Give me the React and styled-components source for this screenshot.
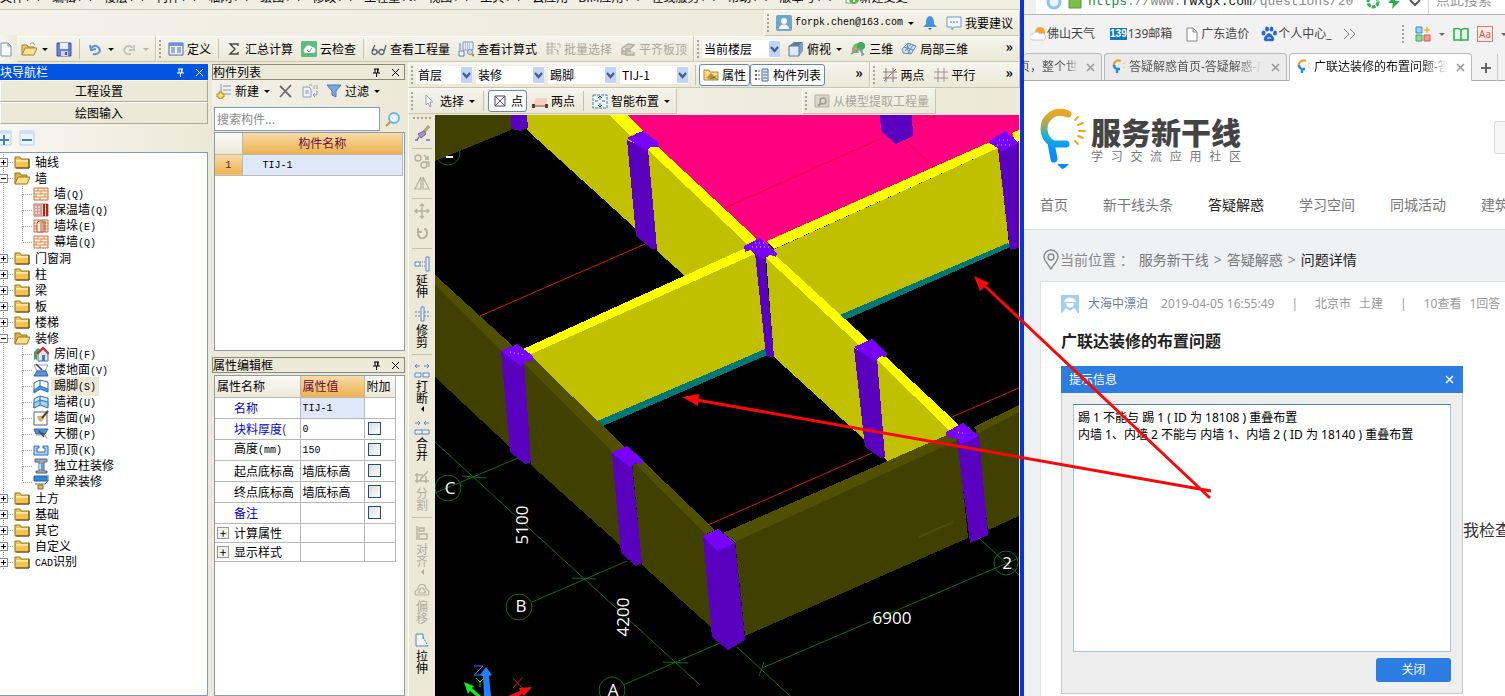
import React, { useState } from "react";
import styled, { createGlobalStyle, css } from "styled-components";

const GlobalStyle = createGlobalStyle`
  * {
    box-sizing: border-box;
  }
  body {
    margin: 0;
    overflow: hidden;
    font: 12px/16px "Noto Sans CJK SC", sans-serif;
    color: #000;
  }
  button, input, select, textarea {
    font: inherit;
    color: inherit;
  }
`;

/* ---------- icons ---------- */

const brick = (
  <>
    <path d="M1 2h14v12H1z" fill="#fdf0dc" stroke="#b8754c" />
    <path d="M1 5h14M1 8h14M1 11h14M5 2v3M11 2v3M8 5v3M3 8v3M12 8v3M7 11v3" stroke="#e08a50" fill="none" />
  </>
);

const icons = {
  page: <path d="M2 2h7l3 3v10H2z M9 2v3h3" fill="#f8fbff" stroke="#7c90ad" />,
  open: (
    <>
      <path d="M1 14V4h5l1 2h6v2" fill="#f1c865" stroke="#a5823a" />
      <path d="M1 14l3-7h12l-3 7z" fill="#ffe08c" stroke="#a5823a" />
      <path d="M9 3c2-2 4-1 5 1" fill="none" stroke="#7b8a99" />
    </>
  ),
  save: (
    <>
      <path d="M1 2h14v13H1z" fill="#6d7fd0" stroke="#45559c" />
      <path d="M4 2h8v6H4z" fill="#e9eefb" />
      <path d="M5 10h7v5H5z" fill="#cdd6ef" />
      <path d="M9 11h2v3H9z" fill="#45559c" />
    </>
  ),
  undo: <path d="M6 13c6 1 8-3 6-6S6 4 5 7M3 4l1 5 5-1" fill="none" stroke="#5f8fd6" strokeWidth="2" />,
  redo: <path d="M9 13c-6 1-8-3-6-6s6-3 7 0M12 4v5H7" fill="none" stroke="#c4c4bc" strokeWidth="2" />,
  define: (
    <>
      <path d="M1 2h14v12H1z" fill="#eef4ff" stroke="#4a69a8" />
      <path d="M1 2h14v3H1z" fill="#6d92d8" />
      <path d="M3 7h4M3 9h4M3 11h4M9 7h4M9 9h4M9 11h4" stroke="#4a69a8" />
    </>
  ),
  sigma: <path d="M12 5V3H4l5 5-5 5h8v-2" fill="none" stroke="#444" strokeWidth="1.4" />,
  cloud: (
    <>
      <rect width="16" height="16" rx="1" fill="#5cbd83" />
      <path d="M4 12a3 3 0 0 1 0-5 4 4 0 0 1 7-1 3 3 0 0 1 1 6z" fill="#fff" />
      <path d="M6 9l2 2 3-4" fill="none" stroke="#5cbd83" />
    </>
  ),
  glasses: <path d="M1 11a2.500 2.500 0 1 0 5 0 2.500 2.500 0 1 0-5 0M8 11a2.500 2.500 0 1 0 5 0 2.500 2.500 0 1 0-5 0M6 11h2M1 10l3-6M13 11l2-7" fill="none" stroke="#5d6574" strokeWidth="1.3" />,
  formula: (
    <>
      <path d="M5 1h10v8H5z" fill="#e5ecfa" stroke="#8397c0" />
      <path d="M7 3h6M7 5h6M7 7h6" stroke="#8397c0" strokeDasharray="1 1" />
      <path d="M2 2v7M1 10h5v5H1z" stroke="#4f7fc8" fill="#fff" />
      <circle cx="12" cy="11" r="2.5" fill="#c9d8ee" stroke="#8397c0" />
      <path d="M14 13l2 2" stroke="#b0813a" strokeWidth="2" />
    </>
  ),
  batch: <path d="M1 3h10M1 6h10M1 9h6M1 12h6M3 1v13M7 1v13M9 8l5 2-2 1 2 3M12 3h3v4" fill="none" stroke="#b5b3a6" />,
  slab: <path d="M2 7l6-4 6 1-4 4H6v6h8v-3M2 7v6h4M3 10h8" fill="#d4d1c2" stroke="#b0ad9f" strokeWidth="1.4" />,
  cube: (
    <>
      <path d="M1 5l5-4h9l-4 4z" fill="#5a7ca5" />
      <path d="M11 5l4-4v9l-4 5z" fill="#7fa0c8" />
      <path d="M1 5h10v10H1z" fill="#dfeaf7" stroke="#587aa4" />
    </>
  ),
  orbit: (
    <>
      <path d="M2 12C1 5 5 2 9 2l3 3-4 3 1 4z" fill="#5cbf7c" />
      <circle cx="11" cy="5" r="4" fill="#3fae5f" />
      <path d="M3 7l4-2v5l-3 2z" fill="#e4974b" />
      <path d="M1 13l8-5 5 6M12 8v7" fill="none" stroke="#8a97a8" strokeWidth="1.5" />
    </>
  ),
  local3d: (
    <>
      <path d="M1 8l6-6 8 3-5 8-8-1z" fill="#cfe2f5" stroke="#5e8cba" />
      <path d="M4 10l6-7M7 12l5-8M3 6l9 3M7 2l-1 6 4 5" stroke="#5e8cba" fill="none" />
    </>
  ),
  user: (
    <>
      <rect width="16" height="16" rx="2" fill="#6ca7cc" />
      <circle cx="8" cy="6" r="3" fill="#fff" />
      <path d="M3 14c0-6 10-6 10 0z" fill="#fff" />
    </>
  ),
  bell: (
    <>
      <path d="M8 1c4 1 4 5 4 8l3 3H1l3-3c0-3 0-7 4-8z" fill="#4a90e2" />
      <path d="M6 13h4l-2 2z" fill="#2d6bb8" />
    </>
  ),
  suggest: (
    <>
      <path d="M1 2h14v10H8l-2 3v-3H1z" fill="#f4f9ff" stroke="#6c9ad0" />
      <path d="M4 7h9" stroke="#4a7ab0" strokeDasharray="2 1" />
    </>
  ),
  change: (
    <>
      <path d="M2 2h9v12H2z" fill="#fff" stroke="#6aa06a" />
      <circle cx="10" cy="10" r="5" fill="#56b947" />
      <path d="M10 7v6M7 10h6" stroke="#fff" strokeWidth="2" />
    </>
  ),
  props: (
    <>
      <path d="M1 3h5l1 2h8v8H1z" fill="#fdda85" stroke="#a9843c" />
      <path d="M3 11l5-5 3 3 3-1-3 5z" fill="#c88a2e" />
      <path d="M7 12l4-2 4 3" stroke="#3a8a4a" fill="none" />
    </>
  ),
  list: (
    <>
      <path d="M1 3h2v2H1zM1 7h2v2H1zM1 11h2v2H1z" fill="#5d6c88" />
      <path d="M4 4h2M4 8h2M4 12h2" stroke="#5d6c88" />
      <path d="M8 2h6v12H8z" fill="#dfe9fa" stroke="#4a69a8" />
      <path d="M9 5h4M9 8h4M9 11h4" stroke="#4a69a8" />
    </>
  ),
  twoAxis: <path d="M4 1v14M11 1v14M1 5h14M1 11h14M2 14L14 2" stroke="#8a7780" fill="none" />,
  parallel: <path d="M5 1v14M11 1v14M1 5h14M1 11h14" stroke="#a08c90" fill="none" />,
  cursor: <path d="M5 2v10l2-2 2 4 1-1-1-4h3z" fill="#fff" stroke="#8fa4c4" />,
  point: (
    <>
      <path d="M3 3h10v10H3z" fill="#fff" stroke="#33458e" />
      <path d="M3 3l10 10M13 3L3 13" stroke="#b0344f" />
    </>
  ),
  line2: (
    <>
      <path d="M1 12l3-7h11v7z" fill="#f6cfc2" />
      <path d="M1 13h14" stroke="#7a4a40" />
      <path d="M0 11h3v4H0zM13 11h3v4h-3z" fill="#5d403a" />
    </>
  ),
  smart: (
    <>
      <path d="M1 2h14v13H1z" fill="#eef6ff" stroke="#4c77a8" strokeDasharray="3 1" />
      <path d="M8 4v3M8 10v3M3 8h3M10 8h3M6 5l2-2 2 2M6 12l2 2 2-2" stroke="#3e5f8a" fill="none" />
    </>
  ),
  extract: (
    <>
      <path d="M1 2h14v12H1z" fill="#d9d6c8" stroke="#b5b2a4" />
      <circle cx="9" cy="8" r="3" fill="none" stroke="#a09d90" strokeWidth="1.5" />
      <path d="M7 10l-3 3" stroke="#a09d90" strokeWidth="2" />
    </>
  ),
  add: (
    <>
      <path d="M7 3h8M7 7h8M7 11h8M5 1v8" stroke="#7d93ba" fill="none" />
      <path d="M3 9h3v2h2v3H6v2H3v-2H1v-3h2z" fill="#ffe063" stroke="#a98c20" />
    </>
  ),
  remove: <path d="M2 3l11 11M13 2L2 14" stroke="#6d6d6d" strokeWidth="1.8" />,
  copyDoc: (
    <>
      <path d="M1 4h6l2 2v8H1zM7 2h3" fill="#eef3fb" stroke="#8b9dbd" />
      <path d="M3 8h4M3 10h4M12 2v4M15 2v4M15 8v4h-4M13 10l-2 2 2 2" fill="none" stroke="#8b9dbd" />
    </>
  ),
  filter: <path d="M1 2h14l-5 6v6l-4-2V8z" fill="#7aa8e4" stroke="#4b76b5" />,
  search: (
    <>
      <circle cx="9" cy="7" r="5" fill="#e2f2ff" stroke="#6ab4e4" strokeWidth="1.800" />
      <path d="M5 11l-4 4" stroke="#c69450" strokeWidth="2" />
    </>
  ),
  plusBox: (
    <>
      <path d="M1 1h14v14H1z" fill="#edf4ff" stroke="#b9cce8" />
      <path d="M1 1h14v3H1z" fill="#cfdffa" />
      <path d="M3 10h10M8 5v10" stroke="#3f87b8" strokeWidth="2" />
    </>
  ),
  minusBox: (
    <>
      <path d="M1 1h14v14H1z" fill="#edf4ff" stroke="#b9cce8" />
      <path d="M1 1h14v3H1z" fill="#cfdffa" />
      <path d="M3 10h10" stroke="#3f87b8" strokeWidth="2" />
    </>
  ),
  folder: (
    <>
      <path d="M1 3h5l1 2h8v9H1z" fill="#f3c44d" stroke="#8d7435" />
      <path d="M2 6h12v2H2z" fill="#ffe596" />
      <path d="M2 14h13V5" fill="none" stroke="#584617" />
    </>
  ),
  folderOpen: (
    <>
      <path d="M1 14V3h5l1 2h6v3" fill="#e5b43f" stroke="#8d7435" />
      <path d="M1 14l3-7h12l-3 7z" fill="#ffdf80" stroke="#8d7435" />
    </>
  ),
  brick,
  brickWarm: (
    <>
      {brick}
      <path d="M1 2h8v12H1z" fill="#d79a9a" />
      <path d="M11 2v12M14 2v12" stroke="#a02b22" strokeWidth="2" />
      <path d="M2 5h6M2 8h6M2 11h6" stroke="#fff" strokeDasharray="2 1" />
    </>
  ),
  brickPier: (
    <>
      {brick}
      <path d="M4 5l2-2h4v11H4z" fill="#fff6ea" stroke="#b5512c" />
      <path d="M8 4v10M12 3v11" stroke="#b5512c" />
    </>
  ),
  room: (
    <>
      <path d="M1 7l3-4v9l-3 2z" fill="#3c9a58" />
      <path d="M1 6l4-4 3 2-4 4v6l-3-2z" fill="#3fa85c" />
      <path d="M5 8v7h10V8l-5-5z" fill="#dceaff" stroke="#4a6aa8" />
      <path d="M4 8l6-6 6 6" fill="none" stroke="#cf3438" strokeWidth="2.400" />
      <path d="M9 9h3v6H9z" fill="#4a78c8" />
    </>
  ),
  floor: (
    <>
      <path d="M1 3h14l-3 6H4z" fill="#fff" stroke="#8fa2c0" />
      <path d="M4 9h9l2 5H1z" fill="#5a94e0" stroke="#2f62ae" />
      <path d="M3 2l6 6" stroke="#444" strokeWidth="1.6" />
    </>
  ),
  skirting: (
    <>
      <path d="M1 5l6-3 8 2v8l-7-2-7 4z" fill="#f3f9ff" stroke="#2e6fb6" />
      <path d="M1 12l6-4 8 3v3l-8-3-6 4zM7 2v7" fill="#4a9ae6" stroke="#2e6fb6" />
    </>
  ),
  dado: (
    <>
      <path d="M1 5l6-3 8 2v8l-7-2-7 4z" fill="#cfe6fb" stroke="#2e6fb6" />
      <path d="M1 9l6-3 8 2v6l-8-3-6 3zM7 2v9" fill="#a3d0f5" stroke="#2e6fb6" />
    </>
  ),
  wallFace: (
    <>
      <path d="M1 2h13v13H1z" fill="#fff" stroke="#565f70" />
      <path d="M4 6h7v3l-3 3-3-2z" fill="#d8b46c" />
      <path d="M9 8l6-7" stroke="#54402a" strokeWidth="2" />
    </>
  ),
  ceiling: (
    <>
      <path d="M1 3h14l-3 5H3z" fill="#4b90de" stroke="#3167ae" />
      <path d="M3 9h9l2 4" fill="none" stroke="#8fa2c0" />
      <path d="M6 5l5 6M7 7l5 1" stroke="#4b4b4b" strokeWidth="1.6" />
    </>
  ),
  suspend: <path d="M1 4h5v2H4v4h8V6h-2V4h5v9H1z" fill="#a9d3f7" stroke="#2e6fb6" />,
  column: (
    <>
      <path d="M2 1h12v3h-3v9h3v2H3v-2h3V4H2z" fill="#9da5b1" stroke="#586474" />
      <path d="M6 6h4v5H6z" fill="#a9d8fb" />
      <path d="M9 5v8" stroke="#2e6fb6" />
    </>
  ),
  beam: (
    <>
      <path d="M1 2h13v5H1z" fill="#2f87d8" stroke="#1f62a6" />
      <path d="M15 1v6l-3 3H2" fill="none" stroke="#4a6c94" />
      <path d="M5 11h5v4H5z" fill="#d8b46c" stroke="#876c38" />
    </>
  ),
  brush: (
    <>
      <path d="M15 1l-5 6" stroke="#a8a878" strokeWidth="3" />
      <path d="M10 6L4 9l3 4 5-4z" fill="#a992c8" stroke="#74609a" />
      <path d="M1 15h3M5 12l-2 3M12 15h4" stroke="#7a6cb0" strokeWidth="1.500" />
    </>
  ),
  copy: <path d="M1 5a3 3 0 1 0 6 0 3 3 0 1 0-6 0M7 12a3 3 0 1 0 6 0 3 3 0 1 0-6 0M10 2l4 4M14 3v3h-3M9 9h6v5" fill="none" stroke="#b4b1a4" strokeWidth="1.4" />,
  mirror: <path d="M7 2v12H1zM9 2v12h6z" fill="none" stroke="#b4b1a4" strokeWidth="1.200" />,
  move: <path d="M8 1v14M1 8h14M6 3l2-2 2 2M6 13l2 2 2-2M3 6L1 8l2 2M13 6l2 2-2 2" fill="none" stroke="#b4b1a4" strokeWidth="1.4" />,
  rotate: <path d="M4 3v4h4M4 7c-1 8 9 8 9 1 0-2-1-4-3-4" fill="none" stroke="#b4b1a4" strokeWidth="2" />,
  extend: (
    <>
      <path d="M12 1h3v14h-3zM1 6h5v4H1z" fill="#eaf2ff" stroke="#5c86c4" />
      <path d="M6 6h6M6 10h6" stroke="#5c86c4" strokeDasharray="1 1" />
    </>
  ),
  trim: (
    <>
      <path d="M7 1h3v14H7z" fill="#eaf2ff" stroke="#5c86c4" />
      <path d="M1 6h6M1 10h6M10 6h6M10 10h6" stroke="#5c86c4" strokeDasharray="2 1" />
    </>
  ),
  split2: <path d="M1 11h6v4H1zM9 11h6v4H9zM1 4h5M10 4h5M3 2L1 4l2 2M13 2l2 2-2 2" fill="#eaf2ff" stroke="#5c86c4" />,
  merge: <path d="M1 11h14v4H1zM8 11v4M1 4h5M10 4h5M4 2l2 2-2 2M12 2l-2 2 2 2" fill="#eaf2ff" stroke="#5c86c4" />,
  divide: <path d="M1 12h14M1 6h8M3 4v10M12 7v7M6 11l8-9" fill="none" stroke="#b4b1a4" strokeWidth="1.4" />,
  align: <path d="M3 1v14M5 3h5v3H5zM5 9h8v5H5z" fill="none" stroke="#b4b1a4" strokeWidth="1.4" />,
  offset: <path d="M2 13c-2-3 0-5 2-6 0-6 8-6 8 0 2 1 4 3 2 6zM5 11c-1-2 1-2 1-3 0-3 4-3 4 0 0 1 2 1 1 3z" fill="none" stroke="#b4b1a4" strokeWidth="1.2" />,
  stretch: (
    <>
      <path d="M2 2h7v4l5 8H2z" fill="#eef5ff" stroke="none" />
      <path d="M14 14H2V2h7v5" fill="none" stroke="#5c86a8" />
      <path d="M9 5l5 9" stroke="#5c86a8" strokeDasharray="2 1" />
    </>
  ),
  bulb: (
    <>
      <path d="M10 2C5 0 2 4 3 8" fill="none" stroke="#e8a922" strokeWidth="2.400" />
      <path d="M3 6c0 4 3 4 6 4M6 10v4" fill="none" stroke="#1b8df0" strokeWidth="2.400" />
      <path d="M12 5l2-1M12 8l2 1" stroke="#f3c878" />
    </>
  ),
  weather: (
    <>
      <circle cx="10" cy="6" r="5" fill="#f9a233" />
      <path d="M2 14a3 3 0 0 1 1-6 4 4 0 0 1 7 0 3 3 0 0 1 4 6z" fill="#fff" stroke="#c9ccd2" />
    </>
  ),
  blank: <path d="M3 2h6l4 4v9H3zM9 2v4h4" fill="#fff" stroke="#888" />,
  paw: (
    <g fill="#2b66d9">
      <ellipse cx="2.500" cy="7" rx="2" ry="2.500" />
      <ellipse cx="6" cy="3" rx="2" ry="2.500" />
      <ellipse cx="10.500" cy="3" rx="2" ry="2.500" />
      <ellipse cx="14" cy="7" rx="2" ry="2.500" />
      <path d="M8 7c2 0 6 5 5 7s-3 1-5 1-4 1-5-1 3-7 5-7z" />
      <path d="M6 12h4" stroke="#fff" />
    </g>
  ),
  apps: (
    <>
      <path d="M1 1h6v6H1z" fill="#9bd2f4" stroke="#3b8fca" />
      <path d="M1 9h6v6H1z" fill="#8ed89d" stroke="#3fa657" />
      <path d="M9 9h6v6H9z" fill="#f49c92" stroke="#d9584c" />
      <path d="M12 0l1 3 3 1-3 1-1 3-1-3-3-1 3-1z" fill="#f7b924" />
    </>
  ),
  book: <path d="M1 3c3-1 5-1 7 1 2-2 4-2 7-1v11H1zM8 4v11" fill="#e9fbee" stroke="#2cb24c" strokeWidth="1.6" />,
};

const Svg = styled.svg`
  width: 16px;
  height: 16px;
  flex: none;
  display: block;
`;

const Icon = ({ name }) => (
  <Svg viewBox="0 0 16 16" aria-hidden="true">
    {icons[name]}
  </Svg>
);

const Caret = styled.span`
  flex: none;
  margin-left: ${(p) => p.$gap || 0}px;
  border: 3px solid transparent;
  border-top-color: ${(p) => p.$color || "#000"};
  border-bottom: 0;
`;

const Mono = styled.span`
  font: 10px/16px "Liberation Mono", monospace;
`;

/* ---------- shell ---------- */

const Desktop = styled.div`
  position: relative;
  display: grid;
  grid-template-columns: minmax(0, 1fr) 481px;
  height: 100vh;
  overflow: hidden;
`;

const CadWindow = styled.section`
  display: flex;
  flex-direction: column;
  min-width: 0;
  min-height: 0;
  background: #ece9d8;
  border-right: 4px solid #0c34cf;
`;

const MenuBar = styled.nav`
  display: flex;
  align-items: flex-end;
  gap: 10px;
  height: 10px;
  padding-bottom: 4px;
  overflow: hidden;
  white-space: nowrap;
  border-bottom: 1px solid #cfccbc;
  background: #f1efe4;
`;

const MenuItem = styled.button`
  display: flex;
  flex: none;
  align-items: center;
  padding: 0;
  border: 0;
  background: none;
  line-height: 16px;
`;

const ToolRow = styled.div`
  display: flex;
  flex: none;
  align-items: stretch;
  height: 26px;
  justify-content: ${(p) => (p.$end ? "flex-end" : "flex-start")};
  background: linear-gradient(90deg, #f3f1e8, #ece9d8);
`;

const ToolBar = styled.div`
  display: flex;
  align-items: center;
  gap: ${(p) => p.$gap || 0}px;
  flex: ${(p) => (p.$grow ? "1" : "none")};
  min-width: 0;
  padding: 0 2px;
  border: 1px solid;
  border-color: #fbfaf5 #c9c5b2 #c9c5b2 #fbfaf5;
  background: linear-gradient(#f5f4ec, #ebe8d7);
`;

const Grip = styled.span`
  flex: none;
  width: 3px;
  height: 18px;
  margin-right: 2px;
  background: radial-gradient(circle at 1px 1px, #a6a392 1px, transparent 1px) 0 0 / 3px 4px;
`;

const Sep = styled.span`
  flex: none;
  width: 1px;
  height: 20px;
  margin: 0 3px;
  background: #c5c2b2;
`;

const Tool = styled.button`
  display: flex;
  flex: none;
  align-items: center;
  gap: 3px;
  height: 22px;
  padding: 0 4px;
  border: 0;
  border-radius: 3px;
  background: none;
  white-space: nowrap;
  ${Caret} {
    margin-left: 2px;
  }
  &:disabled {
    color: #a9a698;
  }
  ${(p) =>
    p.$pressed &&
    css`
      padding: 0 3px;
      border: 1px solid #6a87b4;
      background: #fdfdfb;
    `}
`;

const Spacer = styled.span`
  flex: 1;
`;

const More = styled.button`
  padding: 0 4px 6px;
  border: 0;
  background: none;
  font-size: 14px;
  font-weight: 700;
  line-height: 14px;
`;

const ComboBox = styled.label`
  position: relative;
  flex: none;
  width: ${(p) => p.$width}px;
  margin-right: 4px;
`;

const ComboSelect = styled.select`
  display: block;
  width: 100%;
  height: 18px;
  padding: 0 2px;
  border: 0;
  border-radius: 0;
  background: #fff;
  appearance: none;
  outline: none;
  line-height: 16px;
`;

const ComboArrow = styled.svg`
  position: absolute;
  top: 1px;
  right: 0;
  width: 11px;
  height: 16px;
  pointer-events: none;
`;

const Combo = ({ width, label, options }) => (
  <ComboBox $width={width}>
    <ComboSelect aria-label={label}>
      {options.map((o) => (
        <option key={o}>{o}</option>
      ))}
    </ComboSelect>
    <ComboArrow viewBox="0 0 11 16">
      <rect width="11" height="16" rx="1" fill="#c1d3fb" />
      <path d="M2 6l3.500 4L9 6" fill="none" stroke="#3d5c94" strokeWidth="2.200" />
    </ComboArrow>
  </ComboBox>
);

const CadBody = styled.div`
  display: flex;
  flex: 1;
  min-height: 0;
`;

/* ---------- docked panels ---------- */

const Dock = styled.aside`
  display: flex;
  flex: none;
  flex-direction: column;
  width: ${(p) => p.$width}px;
  padding-top: 2px;
  margin-right: 4px;
  min-height: 0;
`;

const DockTitle = styled.header`
  display: flex;
  flex: none;
  align-items: center;
  gap: 10px;
  height: 16px;
  padding-right: 4px;
  overflow: hidden;
  color: ${(p) => (p.$active ? "#fff" : "#000")};
  background: ${(p) => (p.$active ? "#0054e3" : "#ece9d8")};
  border: ${(p) => (p.$active ? "0" : "1px solid #8b887a")};
  white-space: nowrap;
`;

const DockName = styled.h2`
  flex: 1;
  margin: 0;
  font-size: 12px;
  font-weight: 400;
  line-height: 14px;
`;

const DockButton = styled.button`
  padding: 0;
  border: 0;
  background: none;
`;

const SmallSvg = styled.svg`
  display: block;
  width: 9px;
  height: 9px;
`;

const DockHeader = ({ title, active }) => (
  <DockTitle $active={active}>
    <DockName>{title}</DockName>
    <DockButton aria-label="pin">
      <SmallSvg viewBox="0 0 9 9">
        <path d="M2 1h5M3 1v4M6 1v4M1 5h7M4.500 5v4M5.500 1v4" fill="none" stroke="currentColor" />
      </SmallSvg>
    </DockButton>
    <DockButton aria-label="close">
      <SmallSvg viewBox="0 0 9 9">
        <path d="M1 1l7 7M8 1L1 8" stroke="currentColor" />
      </SmallSvg>
    </DockButton>
  </DockTitle>
);

const WideButton = styled.button`
  flex: none;
  height: 22px;
  padding: 0 10px 0 0;
  border: 1px solid;
  border-color: #fff #aca899 #aca899 #fff;
  background: #ece9d8;
`;

const IconStrip = styled.div`
  display: flex;
  flex: none;
  align-items: center;
  gap: 7px;
  height: 28px;
  padding-right: 2px;
  margin-left: -4px;
  background: linear-gradient(90deg, #f8f7f1, #ece9d8);
`;

const BareButton = styled.button`
  padding: 0;
  border: 0;
  background: none;
`;

const Tree = styled.ul`
  flex: 1;
  min-height: 0;
  margin: 0;
  padding: 1px 0 0;
  overflow: hidden;
  list-style: none;
  background: #fff;
  border: 1px solid #7f9db9;
  border-left: 0;
`;

const TreeRow = styled.li`
  display: flex;
  align-items: center;
  height: 16px;
`;

const TreeLabel = styled.span`
  margin-left: 2px;
  padding: 0 3px;
  line-height: 16px;
  white-space: nowrap;
  background: ${(p) => (p.$selected ? "#ece9d8" : "none")};
`;

const Guide = styled.svg`
  flex: none;
  width: ${(p) => p.$width}px;
  height: 16px;
`;

const treeData = [
  { text: "轴线" },
  {
    text: "墙",
    items: [
      ["brick", "墙", "(Q)"],
      ["brickWarm", "保温墙", "(Q)"],
      ["brickPier", "墙垛", "(E)"],
      ["brick", "幕墙", "(Q)"],
    ],
  },
  { text: "门窗洞" },
  { text: "柱" },
  { text: "梁" },
  { text: "板" },
  { text: "楼梯" },
  {
    text: "装修",
    items: [
      ["room", "房间", "(F)"],
      ["floor", "楼地面", "(V)"],
      ["skirting", "踢脚", "(S)"],
      ["dado", "墙裙", "(U)"],
      ["wallFace", "墙面", "(W)"],
      ["ceiling", "天棚", "(P)"],
      ["suspend", "吊顶", "(K)"],
      ["column", "独立柱装修", ""],
      ["beam", "单梁装修", ""],
    ],
  },
  { text: "土方" },
  { text: "基础" },
  { text: "其它" },
  { text: "自定义" },
  { text: "CAD识别" },
];

const dots = { stroke: "#a0a0a0", strokeDasharray: "1 1", fill: "none" };

const NavTree = () => (
  <Tree>
    {treeData.map((node) => (
      <React.Fragment key={node.text}>
        <TreeRow>
          <Guide $width={14} viewBox="0 0 14 16">
            <path d="M3.500 0v16M8 8.500h6" {...dots} />
            <rect x="-0.500" y="4.500" width="8" height="8" fill="#fff" stroke="#7c8ba5" />
            <path d={node.items ? "M1 8.500h5" : "M1 8.500h5M3.500 6v5"} stroke="#000" />
          </Guide>
          <Icon name={node.items ? "folderOpen" : "folder"} />
          <TreeLabel>
            {node.text.startsWith("CAD") ? (
              <>
                <Mono>CAD</Mono>识别
              </>
            ) : (
              node.text
            )}
          </TreeLabel>
        </TreeRow>
        {(node.items || []).map(([icon, text, key], i) => (
          <TreeRow key={text}>
            <Guide $width={33} viewBox="0 0 33 16">
              <path d={`M3.500 0v16M22.500 0v${i === node.items.length - 1 ? 8 : 16}M23 8.500h10`} {...dots} />
            </Guide>
            <Icon name={icon} />
            <TreeLabel $selected={text === "踢脚"}>
              {text}
              <Mono>{key}</Mono>
            </TreeLabel>
          </TreeRow>
        ))}
      </React.Fragment>
    ))}
  </Tree>
);

const SearchLine = styled.div`
  display: flex;
  flex: none;
  align-items: center;
  gap: 5px;
  height: 25px;
  padding-left: 2px;
`;

const SearchInput = styled.input`
  width: 166px;
  height: 24px;
  padding: 0 2px;
  border: 1px solid #7f9db9;
  background: #fff;
  outline: none;
  &::placeholder {
    color: #8a8a8a;
    opacity: 1;
  }
`;

const ListFrame = styled.div`
  flex: none;
  height: 219px;
  margin: 1px 0 6px 2px;
  border: 1px solid #8f9aa8;
  background: #fff;
`;

const PropFrame = styled(ListFrame)`
  flex: 1;
  min-height: 0;
  height: auto;
  margin: 2px 0 0 2px;
`;

const Grid = styled.table`
  width: ${(p) => p.$width}px;
  border-collapse: collapse;
  table-layout: fixed;
  th,
  td {
    padding: 0 2px;
    overflow: hidden;
    font-weight: 400;
    text-align: left;
    white-space: nowrap;
    border: 1px solid #b8b8b8;
    border-width: 0 1px 1px 0;
  }
`;

const Row = styled.tr`
  height: ${(p) => p.$height || 21}px;
`;

const Head = styled.th`
  && {
    text-align: ${(p) => (p.$center ? "center" : "left")};
  }
  background: ${(p) =>
    p.$hot ? "linear-gradient(#f7dba6, #eeb14f)" : "linear-gradient(#fbfaf6, #ece9d8)"};
  color: ${(p) => (p.$hot ? "#6b0f3f" : "#000")};
`;

const Value = styled.td`
  background: ${(p) => (p.$tint ? "#dfe8f6" : "#fff")};
`;

const PropName = styled.td`
  && {
    padding-left: ${(p) => (p.$group ? 2 : 19)}px;
  }
  color: ${(p) => (p.$blue ? "#0000d0" : "#000")};
`;

const GroupLine = styled.span`
  display: flex;
  align-items: center;
  gap: 5px;
`;

const Expand = styled.button`
  width: 12px;
  height: 12px;
  padding: 0;
  border: 1px solid #9a9a9a;
  background: #f0efe8;
  line-height: 10px;
`;

const Check = styled.input`
  display: block;
  width: 13px;
  height: 13px;
  margin: 0 1px;
  appearance: none;
  border: 1px solid #1c5180;
  background: linear-gradient(135deg, #dcdcd7, #fff);
  &:checked {
    background: #1c5180;
  }
`;

const propRows = [
  { name: "名称", value: <Mono>TIJ-1</Mono>, blue: true, tint: true },
  { name: "块料厚度(", value: <Mono>0</Mono>, blue: true, check: true },
  { name: <>高度<Mono>(mm)</Mono></>, value: <Mono>150</Mono>, check: true },
  { name: "起点底标高", value: "墙底标高", check: true },
  { name: "终点底标高", value: "墙底标高", check: true },
  { name: "备注", value: "", blue: true, check: true },
];

const ComponentDock = () => {
  const [query, setQuery] = useState("");
  return (
    <Dock $width={193}>
      <DockHeader title="构件列表" />
      <ToolRow>
        <Tool>
          <Icon name="add" />
          新建
          <Caret />
        </Tool>
        <Tool aria-label="delete">
          <Icon name="remove" />
        </Tool>
        <Tool aria-label="copy">
          <Icon name="copyDoc" />
        </Tool>
        <Tool>
          <Icon name="filter" />
          过滤
          <Caret />
        </Tool>
      </ToolRow>
      <SearchLine>
        <SearchInput
          aria-label="搜索构件"
          placeholder="搜索构件..."
          value={query}
          onChange={(e) => setQuery(e.target.value)}
        />
        <BareButton aria-label="search">
          <Icon name="search" />
        </BareButton>
      </SearchLine>
      <ListFrame>
        <Grid $width={188}>
          <colgroup>
            <col width="27" />
            <col />
          </colgroup>
          <tbody>
            <Row>
              <Head />
              <Head $hot $center>构件名称</Head>
            </Row>
            <Row>
              <Head $hot $center>
                <Mono>1</Mono>
              </Head>
              <Value $tint>
                <Mono>&nbsp;&nbsp;&nbsp;TIJ-1</Mono>
              </Value>
            </Row>
          </tbody>
        </Grid>
      </ListFrame>
      <DockHeader title="属性编辑框" />
      <PropFrame>
        <Grid $width={180}>
          <colgroup>
            <col width="85" />
            <col width="64" />
            <col width="31" />
          </colgroup>
          <thead>
            <Row>
              <Head>属性名称</Head>
              <Head $hot>属性值</Head>
              <Head>附加</Head>
            </Row>
          </thead>
          <tbody>
            {propRows.map((r, i) => (
              <Row key={i}>
                <PropName $blue={r.blue}>{r.name}</PropName>
                <Value $tint={r.tint}>{r.value}</Value>
                <Value>{r.check && <Check type="checkbox" aria-label="附加" />}</Value>
              </Row>
            ))}
            {["计算属性", "显示样式"].map((g) => (
              <Row key={g} $height={19}>
                <PropName $group>
                  <GroupLine>
                    <Expand>+</Expand>
                    {g}
                  </GroupLine>
                </PropName>
                <Value />
                <Value />
              </Row>
            ))}
          </tbody>
        </Grid>
      </PropFrame>
    </Dock>
  );
};

/* ---------- work area ---------- */

const WorkArea = styled.main`
  display: flex;
  flex: 1;
  flex-direction: column;
  min-width: 0;
  min-height: 0;
  margin-left: -1px;
`;

const RowTail = styled.span`
  flex: none;
  width: 84px;
`;

const AxisTail = styled.span`
  flex: none;
  width: 22px;
`;

const Canvas = styled.div`
  display: flex;
  flex: 1;
  min-height: 0;
  margin-top: 1px;
`;

const SideTools = styled.div`
  display: flex;
  flex: none;
  flex-direction: column;
  align-items: center;
  width: 27px;
  padding-top: 2px;
  border-left: 1px solid #fff;
  overflow: hidden;
`;

const SideGrip = styled.span`
  flex: none;
  width: 18px;
  height: 3px;
  margin-bottom: 2px;
  background: radial-gradient(circle at 1px 1px, #a6a392 1px, transparent 1px) 0 0 / 4px 3px;
`;

const SideSep = styled.span`
  flex: none;
  width: 20px;
  height: 1px;
  margin: 4px 0 1px;
  background: #c5c2b2;
`;

const SideTool = styled.button`
  display: flex;
  flex: none;
  flex-direction: column;
  align-items: center;
  gap: 2px;
  width: 20px;
  height: ${(p) => p.$height}px;
  padding: ${(p) => (p.$height > 22 ? 6 : 3)}px 0 0;
  border: 0;
  background: none;
  line-height: 12px;
  &:disabled {
    color: #b0ad9f;
  }
`;

const SideCaret = styled.span`
  border: 3px solid transparent;
  border-right-color: currentColor;
  border-left: 0;
`;

const sideTools = [
  { icon: "brush" },
  "sep",
  { icon: "copy", off: true },
  { icon: "mirror", off: true },
  "sep",
  { icon: "move", off: true },
  { icon: "rotate", off: true },
  "sep",
  { icon: "extend", text: "延伸" },
  { icon: "trim", text: "修剪" },
  "sep",
  { icon: "split2", text: "打断", menu: true },
  { icon: "merge", text: "合并" },
  { icon: "divide", text: "分割", off: true },
  "sep",
  { icon: "align", text: "对齐", off: true, menu: true },
  { icon: "offset", text: "偏移", off: true },
  { icon: "stretch", text: "拉伸" },
];

const Viewport = styled.svg`
  display: block;
  flex: 1;
  min-width: 0;
  height: 100%;
  margin-right: 1px;
  background: #000;
  font-family: "Open Sans", sans-serif;
  font-size: 17px;
  fill: #fff;
`;

const FACE = "#c0c000";
const EDGE = "#ffff00";
const DARK = "#404000";
const DARK_EDGE = "#505000";
const POST = "#5a00bf";
const CAP = "#7800ff";
const TEAL = "#007878";

/* painted back to front */
const shapes = [
  ["#ff0080", "622,115 1019,115 1019,136 765,246 755,242"],
  [POST, "880,115 912,115 913,136 896,144 881,131"],
  [DARK, "435,115 511,115 511,130 435,161"],
  [FACE, "527,115 612,115 640,139 636,229 527,130"],
  [EDGE, "609,115 627,115 643,131 630,136"],
  [POST, "511,115 527,115 528,128 521,131 511,129"],
  [FACE, "648,150 748,243 756,256 686,277 657,251"],
  [EDGE, "647,149 656,145 757,239 748,245"],
  [POST, "627,140 636,236 652,249 657,249 648,149"],
  [CAP, "627,138 643,131 659,143 658,147 651,147 646,151"],
  [FACE, "766,254 777,248 998,148 1009,244 841,317"],
  [EDGE, "767,241 990,142 998,148 774,249"],
  [TEAL, "840,315 1008,243 1010,247 845,320"],
  [EDGE, "1012,133 1019,130 1019,140 1016,143"],
  [POST, "998,149 1010,250 1019,248 1019,142"],
  [CAP, "988,142 1005,131 1019,143 1001,152 996,147"],
  [FACE, "524,356 753,253 757,254 766,350 597,424 524,362"],
  [EDGE, "523,349 750,246 757,253 529,355"],
  [TEAL, "595,422 765,349 767,355 603,426"],
  [FACE, "766,257 860,343 866,441 774,357"],
  [EDGE, "765,257 773,253 869,341 859,345"],
  [POST, "755,253 766,356 774,357 765,256"],
  [CAP, "744,246 760,238 777,253 776,257 770,255 764,259 755,254 750,250 745,252"],
  [FACE, "877,360 952,430 948,435 888,462 884,457"],
  [EDGE, "876,359 884,355 959,425 951,432"],
  [POST, "854,348 865,447 881,458 885,457 877,358"],
  [CAP, "854,347 872,339 887,353 886,357 880,356 875,361"],
  [DARK, "435,282 502,348 511,448 435,377"],
  [DARK_EDGE, "435,275 514,347 502,351 435,285"],
  [DARK, "523,360 560,394 616,448 620,545 531,465"],
  [DARK_EDGE, "523,362 533,358 573,397 625,447 613,453"],
  [POST, "501,351 510,452 525,464 531,462 524,362"],
  [CAP, "501,351 517,344 533,356 532,362 526,361 521,366"],
  [DARK, "632,461 707,529 712,628 642,565"],
  [DARK_EDGE, "635,464 643,461 715,530 706,534"],
  [POST, "612,453 621,553 636,566 642,563 632,464"],
  [CAP, "612,453 627,446 643,460 642,465 636,463 630,467"],
  [DARK, "735,540 958,437 968,538 745,636"],
  [DARK_EDGE, "723,533 947,435 960,439 735,542"],
  [DARK, "976,430 1019,408 1019,516 988,530"],
  [DARK_EDGE, "974,427 1019,405 1019,412 979,433"],
  [POST, "703,536 712,637 728,650 745,640 735,543"],
  [CAP, "703,536 718,529 735,543 717,551"],
  [POST, "957,440 970,543 988,535 979,436"],
  [CAP, "946,432 963,423 979,436 961,444 955,438 947,437"],
];

const ViewportScene = () => (
  <Viewport viewBox="435 115 584 581" preserveAspectRatio="xMinYMin slice">
    <g fill="none" stroke="#0d6e1e">
      <circle cx="448" cy="153" r="12" />
      <path d="M435 442L675 662L700 685M435 493L518 458M532 602L627 561M623 685L720 643" />
      <path d="M462 476L486 478M572 578L596 579M663 662L688 663M759 676L764 662M737 647L790 696M762 668L1019 558M980 539L1019 575" />
      <circle cx="448" cy="488" r="13" />
      <circle cx="519" cy="607" r="13" />
      <circle cx="612" cy="690" r="13" />
      <circle cx="1006" cy="563" r="12" />
    </g>
    <path d="M446 157h7" stroke="#fff" strokeWidth="2" />
    <g shapeRendering="crispEdges">
      {shapes.map(([color, points]) => (
        <polygon key={points} fill={color} points={points} />
      ))}
    </g>
    <path d="M480 316L645 244M952 417L1019 388M708 525L872 453" stroke="#d01818" />
    <path d="M725 208L880 139M914 125L935 116M905 140L933 167" stroke="#d80030" />
    <path d="M919 537L953 522" stroke={DARK_EDGE} strokeWidth="2" />
    <path d="M755 243h12M752 247h18M510 352l14 3M958 432l8 2M999 140h12M997 145h13" stroke="#e8c8ff" strokeDasharray="1 3" />
    <g textAnchor="middle">
      <text x="450" y="494">C</text>
      <text x="521" y="612">B</text>
      <text x="613" y="696">A</text>
      <text x="1007" y="569">2</text>
      <text x="892" y="624">6900</text>
      <text transform="translate(528 525) rotate(-90)">5100</text>
      <text transform="translate(629 617) rotate(-90)">4200</text>
    </g>
    <path d="M474 666h9l-9 9h9" fill="none" stroke="#1e80ff" />
    <path d="M484 696l-1-20-3-1 6-8 6 8-3 1 2 20z" fill="#1e80ff" />
    <path d="M476 678l4 4 4-4M480 682v5" fill="none" stroke="#10d020" />
    <path d="M476 696l-6-5-2 3-4-12 10 4-2 2 9 8z" fill="#10e820" />
    <path d="M513 678l9 10M522 678l-9 10" stroke="#d01818" />
    <path d="M508 696l12-5-1-3 13-1-8 9-2-2-3 2z" fill="#f01010" />
  </Viewport>
);

/* ---------- browser ---------- */

const Browser = styled.section`
  display: flex;
  flex-direction: column;
  min-width: 0;
  overflow: hidden;
  background: #eff1f3;
  color: #333;
  font-family: "Noto Sans", "Noto Sans CJK SC", sans-serif;
`;

const AddressBar = styled.div`
  display: flex;
  flex: none;
  align-items: flex-end;
  height: 15px;
  padding-left: 12px;
  overflow: hidden;
  background: #f0f0f0;
  border-bottom: 1px solid #b4b4b4;
`;

const AddressInner = styled.div`
  display: flex;
  flex: 1;
  align-items: center;
  gap: 5px;
  height: 24px;
  padding-left: 10px;
  background: #fff;
`;

const Url = styled.span`
  flex: none;
  width: 272px;
  overflow: hidden;
  font: 13px/20px "Liberation Mono", monospace;
  color: #8a8a8a;
  white-space: nowrap;
  b {
    font-weight: 400;
    color: #111;
  }
  i {
    font-style: normal;
    color: #12883c;
  }
`;

const SearchBox = styled.span`
  flex: 1;
  height: 24px;
  padding-left: 7px;
  border-left: 1px solid #d5d5d5;
  color: #999;
  font-size: 14px;
  line-height: 20px;
  white-space: nowrap;
`;

const Bookmarks = styled.nav`
  display: flex;
  flex: none;
  align-items: center;
  gap: 12px;
  height: 38px;
  padding-left: 6px;
  background: #f2f2f2;
  white-space: nowrap;
`;

const Bookmark = styled.a`
  display: flex;
  align-items: center;
  gap: 1px;
  color: #444;
  text-decoration: none;
`;

const Badge139 = styled.span`
  margin-left: 3px;
  font: 700 10px/12px "Liberation Sans", sans-serif;
  color: #fff;
  background: #1379bd;
`;

const BookmarkTools = styled.div`
  display: flex;
  align-items: center;
  gap: 8px;
  margin: 0 -2px 0 auto;
`;

const AaBox = styled.span`
  width: 16px;
  height: 16px;
  border: 1px solid #e0796f;
  background: #fdeceb;
  color: #d9584c;
  font-size: 10px;
  line-height: 14px;
  text-align: center;
`;

const Tabs = styled.div`
  display: flex;
  flex: none;
  align-items: flex-end;
  gap: 2px;
  height: 28px;
  background: #f2f2f2;
  box-shadow: inset 0 -1px #a9a9a9;
`;

const Tab = styled.div`
  display: flex;
  flex: none;
  align-items: center;
  gap: 2px;
  width: ${(p) => p.$width}px;
  height: 28px;
  padding: 0 6px;
  border: 1px solid #b9b9b9;
  border-bottom-color: ${(p) => (p.$active ? "#fff" : "#a9a9a9")};
  border-radius: 4px 4px 0 0;
  background: ${(p) => (p.$active ? "#fff" : "#ebebeb")};
  color: ${(p) => (p.$active ? "#111" : "#555")};
  &:first-child {
    padding-left: 0;
    border-left: 0;
  }
`;

const TabText = styled.span`
  display: flex;
  flex: 1;
  justify-content: ${(p) => (p.$end ? "flex-end" : "flex-start")};
  min-width: 0;
  overflow: hidden;
  white-space: nowrap;
  mask-image: linear-gradient(90deg, #000 80%, transparent);
`;

const TabClose = styled.button`
  margin-left: 6px;
  padding: 0;
  border: 0;
  background: none;
  color: #999;
`;

const NewTab = styled.button`
  display: flex;
  align-items: center;
  justify-content: center;
  width: 24px;
  height: 27px;
  padding: 0;
  border: 0;
  border-right: 1px solid #ccc;
  background: none;
`;

const SiteHeader = styled.header`
  flex: none;
  height: 149px;
  padding: 28px 0 0 16px;
  background: #fff;
  border-bottom: 1px solid #dcdfe1;
`;

const Brand = styled.div`
  display: flex;
  align-items: flex-start;
  gap: 5px;
`;

const Logo = styled.svg`
  width: 46px;
  height: 60px;
`;

const BrandName = styled.h1`
  margin: 5px 0 0;
  font-family: "Noto Sans CJK SC", sans-serif;
  font-size: 30px;
  font-weight: 900;
  line-height: 34px;
  color: #444;
`;

const Slogan = styled.p`
  display: flex;
  justify-content: space-between;
  margin: 1px 0 0;
  color: #777;
`;

const SiteSearch = styled.input`
  flex: none;
  width: 160px;
  height: 33px;
  margin: 12px 0 0 auto;
  border: 1px solid #ddd;
  border-radius: 2px;
  background: #f6f6f6;
`;

const BrandRow = styled.div`
  display: flex;
  margin-right: -149px;
`;

const SiteNav = styled.nav`
  display: flex;
  gap: 35px;
  margin-top: 26px;
  font-size: 14px;
  line-height: 20px;
  white-space: nowrap;
`;

const SiteLink = styled.a`
  flex: none;
  color: ${(p) => (p.$active ? "#222" : "#777")};
  text-decoration: none;
`;

const Crumbs = styled.nav`
  display: flex;
  flex: none;
  align-items: center;
  gap: 5px;
  height: 51px;
  padding: 8px 0 0 19px;
  font-size: 14px;
  line-height: 20px;
  color: #888;
`;

const CrumbLead = styled.span`
  display: flex;
  align-items: center;
  gap: 1px;
`;

const Pin = styled.svg`
  width: 16px;
  height: 21px;
`;

const Card = styled.article`
  flex: 1;
  min-height: 0;
  margin-left: 16px;
  padding: 12px 0 0 20px;
  border: 1px solid #dfe2e4;
  border-width: 1px 0 0 1px;
  background: #fff;
  white-space: nowrap;
`;

const Meta = styled.div`
  display: flex;
  align-items: center;
  height: 20px;
  color: #999;
`;

const MetaText = styled.span`
  margin-left: ${(p) => p.$gap}px;
  color: ${(p) => p.$color || "inherit"};
`;

const Avatar = styled.svg`
  width: 18px;
  height: 18px;
`;

const Title = styled.h2`
  margin: 15px 0 13px;
  font-size: 16px;
  font-weight: 700;
  line-height: 24px;
  color: #222;
`;

const Answer = styled.div`
  display: flex;
  align-items: center;
  font-size: 16px;
`;

const Dialog = styled.div`
  flex: none;
  display: flex;
  flex-direction: column;
  width: 402px;
  height: 328px;
  background: #eee;
  border: 1px solid #c4c6c8;
  border-top: 0;
  font-size: 12px;
`;

const DialogHead = styled.div`
  display: flex;
  flex: none;
  align-items: center;
  justify-content: space-between;
  height: 27px;
  margin: 0 -1px;
  padding: 0 9px 0 8px;
  background: #2b7de1;
  color: #fff;
`;

const Message = styled.textarea`
  flex: 1;
  margin: 11px 11px 6px;
  padding: 4px;
  border: 1px solid #a9c4d8;
  border-top-color: #4a7fa5;
  outline: none;
  resize: none;
  background: #fff;
  color: #000;
  line-height: 17px;
`;

const CloseButton = styled.button`
  align-self: flex-end;
  width: 75px;
  height: 24px;
  margin: 0 11px 11px;
  padding: 0;
  border: 0;
  border-radius: 3px;
  background: #2b7de1;
  color: #fff;
`;

const Overlay = styled.svg`
  position: absolute;
  top: 0;
  left: 0;
  width: 100%;
  height: 100%;
  pointer-events: none;
`;

const message = `踢 1 不能与 踢 1 ( ID 为 18108 ) 重叠布置
内墙 1、内墙 2 不能与 内墙 1、内墙 2 ( ID 为 18140 ) 重叠布置`;

const CloseX = () => (
  <SmallSvg viewBox="0 0 9 9">
    <path d="M1 1l7 7M8 1L1 8" stroke="currentColor" strokeWidth="1.500" />
  </SmallSvg>
);

const BrowserPane = () => (
  <Browser>
    <AddressBar>
      <AddressInner>
        <Svg viewBox="0 0 16 16">
          <circle cx="8" cy="8" r="6" fill="#eaf6ff" stroke="#8cc4ef" strokeWidth="3" />
        </Svg>
        <Svg viewBox="0 0 16 16">
          <path d="M2 4h12v10H2z" fill="#7cc04a" stroke="#5b9a30" />
        </Svg>
        <Url>
          <i>https</i>://www.<b>fwxgx.com</b>/questions/20
        </Url>
        <Svg viewBox="0 0 16 16">
          <circle cx="8" cy="8" r="5" fill="none" stroke="#2cb45c" strokeWidth="3" strokeDasharray="4 1" />
        </Svg>
        <Svg viewBox="0 0 16 16">
          <path d="M9 1L2 9h5l-1 6 8-8H9z" fill="#28b24e" />
        </Svg>
        <Svg viewBox="0 0 16 16">
          <path d="M3 6l5 5 5-5" fill="none" stroke="#555" strokeWidth="2" />
        </Svg>
        <SearchBox>点此搜索</SearchBox>
      </AddressInner>
    </AddressBar>
    <Bookmarks>
      <Bookmark href="#">
        <Icon name="weather" />
        佛山天气
      </Bookmark>
      <Bookmark href="#">
        <Badge139>139</Badge139>139邮箱
      </Bookmark>
      <Bookmark href="#">
        <Icon name="blank" />
        广东造价
      </Bookmark>
      <Bookmark href="#">
        <Icon name="paw" />
        个人中心_
      </Bookmark>
      <Svg viewBox="0 0 16 16">
        <path d="M0 3l5 5-5 5M6 3l5 5-5 5" fill="none" stroke="#888" />
      </Svg>
      <BookmarkTools>
        <Grip />
        <Icon name="apps" />
        <Caret $color="#666" />
        <Icon name="book" />
        <AaBox>Aa</AaBox>
        <Caret $color="#666" />
      </BookmarkTools>
    </Bookmarks>
    <Tabs>
      <Tab $width={78}>
        <TabText $end>主页，整个世</TabText>
        <TabClose aria-label="close tab">
          <CloseX />
        </TabClose>
      </Tab>
      <Tab $width={183}>
        <Icon name="bulb" />
        <TabText>答疑解惑首页-答疑解惑-广</TabText>
        <TabClose aria-label="close tab">
          <CloseX />
        </TabClose>
      </Tab>
      <Tab $width={183} $active>
        <Icon name="bulb" />
        <TabText>广联达装修的布置问题-答疑</TabText>
        <TabClose aria-label="close tab">
          <CloseX />
        </TabClose>
      </Tab>
      <NewTab aria-label="new tab">
        <Svg viewBox="0 0 16 16">
          <path d="M3 8h10M8 3v10" stroke="#666" strokeWidth="2" />
        </Svg>
      </NewTab>
    </Tabs>
    <SiteHeader>
      <BrandRow>
        <Brand>
          <Logo viewBox="0 0 46 60">
            <defs>
              <linearGradient id="bulb" gradientUnits="userSpaceOnUse" x1="0" y1="2" x2="0" y2="44">
                <stop offset="0" stopColor="#f0a81c" />
                <stop offset="0.300" stopColor="#b0a850" />
                <stop offset="0.600" stopColor="#12b0dc" />
                <stop offset="1" stopColor="#0a8cff" />
              </linearGradient>
            </defs>
            <path d="M28 5C15-1 4 9 4 20c0 8 4 12 9 15h13M11 34l3 16" fill="none" stroke="url(#bulb)" strokeWidth="7" strokeLinecap="round" strokeLinejoin="round" />
            <path d="M17 55h12l-4 4-3 1z" fill="#0a8cff" />
            <path d="M35 11l3-3M38 16l5-2M39 22h6M38 27l5 2M35 32l3 3" stroke="#f5a81c" strokeWidth="2" strokeLinecap="round" />
          </Logo>
          <div>
            <BrandName>服务新干线</BrandName>
            <Slogan>
              {[..."学习交流应用社区"].map((c) => (
                <span key={c}>{c}</span>
              ))}
            </Slogan>
          </div>
        </Brand>
        <SiteSearch aria-label="search" />
      </BrandRow>
      <SiteNav>
        {["首页", "新干线头条", "答疑解惑", "学习空间", "同城活动", "建筑"].map((t) => (
          <SiteLink key={t} href="#" $active={t === "答疑解惑"}>
            {t}
          </SiteLink>
        ))}
      </SiteNav>
    </SiteHeader>
    <Crumbs>
      <CrumbLead>
        <Pin viewBox="0 0 16 21">
          <path d="M8 20C4 14 1 11 1 8a7 7 0 0 1 14 0c0 3-3 6-7 12z" fill="none" stroke="#888" strokeWidth="1.400" />
          <circle cx="8" cy="8" r="3" fill="none" stroke="#888" strokeWidth="1.400" />
        </Pin>
        当前位置 ：
      </CrumbLead>
      <SiteLink href="#">服务新干线</SiteLink>&gt;
      <SiteLink href="#">答疑解惑</SiteLink>&gt;
      <SiteLink href="#" $active>
        问题详情
      </SiteLink>
    </Crumbs>
    <Card>
      <Meta>
        <Avatar viewBox="0 0 18 18">
          <rect width="18" height="18" fill="#a5cdf2" />
          <path d="M3 7c1-6 11-6 12 0zM5 8h8c0 6-8 6-8 0zM1 18l4-5 4 3 4-3 4 5z" fill="#fff" />
        </Avatar>
        <MetaText $gap={9} $color="#6d7ba0">大海中漂泊</MetaText>
        <MetaText $gap={13}>2019-04-05 16:55:49</MetaText>
        <MetaText $gap={17}>|</MetaText>
        <MetaText $gap={17}>北京市</MetaText>
        <MetaText $gap={8}>土建</MetaText>
        <MetaText $gap={17}>|</MetaText>
        <MetaText $gap={17}>10查看</MetaText>
        <MetaText $gap={8}>1回答</MetaText>
      </Meta>
      <Title>广联达装修的布置问题</Title>
      <Answer>
        <Dialog>
          <DialogHead>
            提示信息
            <DockButton aria-label="close">
              <CloseX />
            </DockButton>
          </DialogHead>
          <Message aria-label="提示信息" readOnly value={message} />
          <CloseButton>关闭</CloseButton>
        </Dialog>
        我检查
      </Answer>
    </Card>
  </Browser>
);

const menus = [
  ["文件", "(F)"],
  ["编辑", "(E)"],
  ["楼层", "(L)"],
  ["构件", "(N)"],
  ["轴网", "(O)"],
  ["绘图", "(D)"],
  ["修改", "(M)"],
  ["工程量", "(Q)"],
  ["视图", "(V)"],
  ["工具", "(T)"],
  ["云应用", ""],
  ["BIM应用", "(I)"],
  ["在线服务", "(S)"],
  ["帮助", "(H)"],
  ["版本号", "(B)"],
];

const App = () => (
  <Desktop>
    <GlobalStyle />
    <CadWindow>
      <MenuBar>
        {menus.map(([text, key]) => (
          <MenuItem key={text}>
            {text}
            {key && <Mono>{key}</Mono>}
          </MenuItem>
        ))}
        <MenuItem>
          <Icon name="change" />
          新建变更
        </MenuItem>
      </MenuBar>
      <ToolRow $end>
        <ToolBar>
          <Grip />
          <Tool>
            <Icon name="user" />
            <Mono>forpk.chen@163.com</Mono>
            <Caret />
          </Tool>
          <Tool aria-label="notifications">
            <Icon name="bell" />
          </Tool>
          <Tool>
            <Icon name="suggest" />
            我要建议
          </Tool>
        </ToolBar>
      </ToolRow>
      <ToolRow>
        <ToolBar>
          <IconStrip>
            <BareButton aria-label="new">
              <Icon name="page" />
            </BareButton>
          </IconStrip>
          <Tool aria-label="open">
            <Icon name="open" />
            <Caret />
          </Tool>
          <Tool aria-label="save">
            <Icon name="save" />
          </Tool>
          <Sep />
          <Tool aria-label="undo">
            <Icon name="undo" />
            <Caret />
          </Tool>
          <Tool aria-label="redo" disabled>
            <Icon name="redo" />
            <Caret $color="#b5b2a5" />
          </Tool>
        </ToolBar>
        <ToolBar>
          <Grip />
          <Tool>
            <Icon name="define" />
            定义
          </Tool>
          <Sep />
          <Tool>
            <Icon name="sigma" />
            汇总计算
          </Tool>
          <Tool>
            <Icon name="cloud" />
            云检查
          </Tool>
          <Sep />
          <Tool>
            <Icon name="glasses" />
            查看工程量
          </Tool>
          <Tool>
            <Icon name="formula" />
            查看计算式
          </Tool>
          <Tool disabled>
            <Icon name="batch" />
            批量选择
          </Tool>
          <Tool disabled>
            <Icon name="slab" />
            平齐板顶
          </Tool>
        </ToolBar>
        <ToolBar $grow>
          <Grip />
          <Combo width={78} label="楼层范围" options={["当前楼层"]} />
          <Tool>
            <Icon name="cube" />
            俯视
            <Caret />
          </Tool>
          <Tool>
            <Icon name="orbit" />
            三维
          </Tool>
          <Tool>
            <Icon name="local3d" />
            局部三维
          </Tool>
          <Spacer />
          <More>»</More>
        </ToolBar>
      </ToolRow>
      <CadBody>
        <Dock $width={208}>
          <DockHeader title="块导航栏" active />
          <WideButton>工程设置</WideButton>
          <WideButton>绘图输入</WideButton>
          <IconStrip>
            <BareButton aria-label="expand all">
              <Icon name="plusBox" />
            </BareButton>
            <BareButton aria-label="collapse all">
              <Icon name="minusBox" />
            </BareButton>
          </IconStrip>
          <NavTree />
        </Dock>
        <ComponentDock />
        <WorkArea>
          <ToolRow>
            <ToolBar $grow>
              <Grip />
              <Combo width={56} label="楼层" options={["首层"]} />
              <Combo width={68} label="类别" options={["装修"]} />
              <Combo width={68} label="构件类型" options={["踢脚"]} />
              <Combo width={68} label="构件" options={["TIJ-1"]} />
              <Sep />
              <Tool $pressed>
                <Icon name="props" />
                属性
              </Tool>
              <Tool $pressed>
                <Icon name="list" />
                构件列表
              </Tool>
              <Spacer />
              <More>»</More>
            </ToolBar>
            <ToolBar>
              <Grip />
              <Tool>
                <Icon name="twoAxis" />
                两点
              </Tool>
              <Tool>
                <Icon name="parallel" />
                平行
              </Tool>
              <AxisTail />
              <More>»</More>
            </ToolBar>
          </ToolRow>
          <ToolRow>
            <ToolBar $gap={1}>
              <Grip />
              <Tool>
                <Icon name="cursor" />
                选择
                <Caret />
              </Tool>
              <Sep />
              <Tool $pressed>
                <Icon name="point" />
                点
              </Tool>
              <Tool>
                <Icon name="line2" />
                两点
              </Tool>
              <Sep />
              <Tool>
                <Icon name="smart" />
                智能布置
                <Caret />
              </Tool>
            </ToolBar>
            <Spacer />
            <ToolBar>
              <Grip />
              <Tool disabled>
                <Icon name="extract" />
                从模型提取工程量
              </Tool>
            </ToolBar>
            <RowTail />
          </ToolRow>
          <Canvas>
            <SideTools>
              <SideGrip />
              {sideTools.map((t, i) =>
                t === "sep" ? (
                  <SideSep key={i} />
                ) : (
                  <SideTool
                    key={i}
                    disabled={t.off}
                    aria-label={t.text || t.icon}
                    $height={t.text ? (t.menu ? 57 : 50) : 22}
                  >
                    <Icon name={t.icon} />
                    {t.text && (
                      <span>
                        {t.text[0]}
                        <br />
                        {t.text[1]}
                      </span>
                    )}
                    {t.menu && <SideCaret />}
                  </SideTool>
                )
              )}
            </SideTools>
            <ViewportScene />
          </Canvas>
        </WorkArea>
      </CadBody>
    </CadWindow>
    <BrowserPane />
    <Overlay viewBox="0 0 1505 696" preserveAspectRatio="xMinYMin slice">
      <path d="M1211 491L697 400M1210 498L985 286" stroke="#f80808" strokeWidth="3" />
      <path d="M682 397l17-3-1 12zM974 276l15 7-9 8z" fill="#f80808" />
    </Overlay>
  </Desktop>
);

export default App;
